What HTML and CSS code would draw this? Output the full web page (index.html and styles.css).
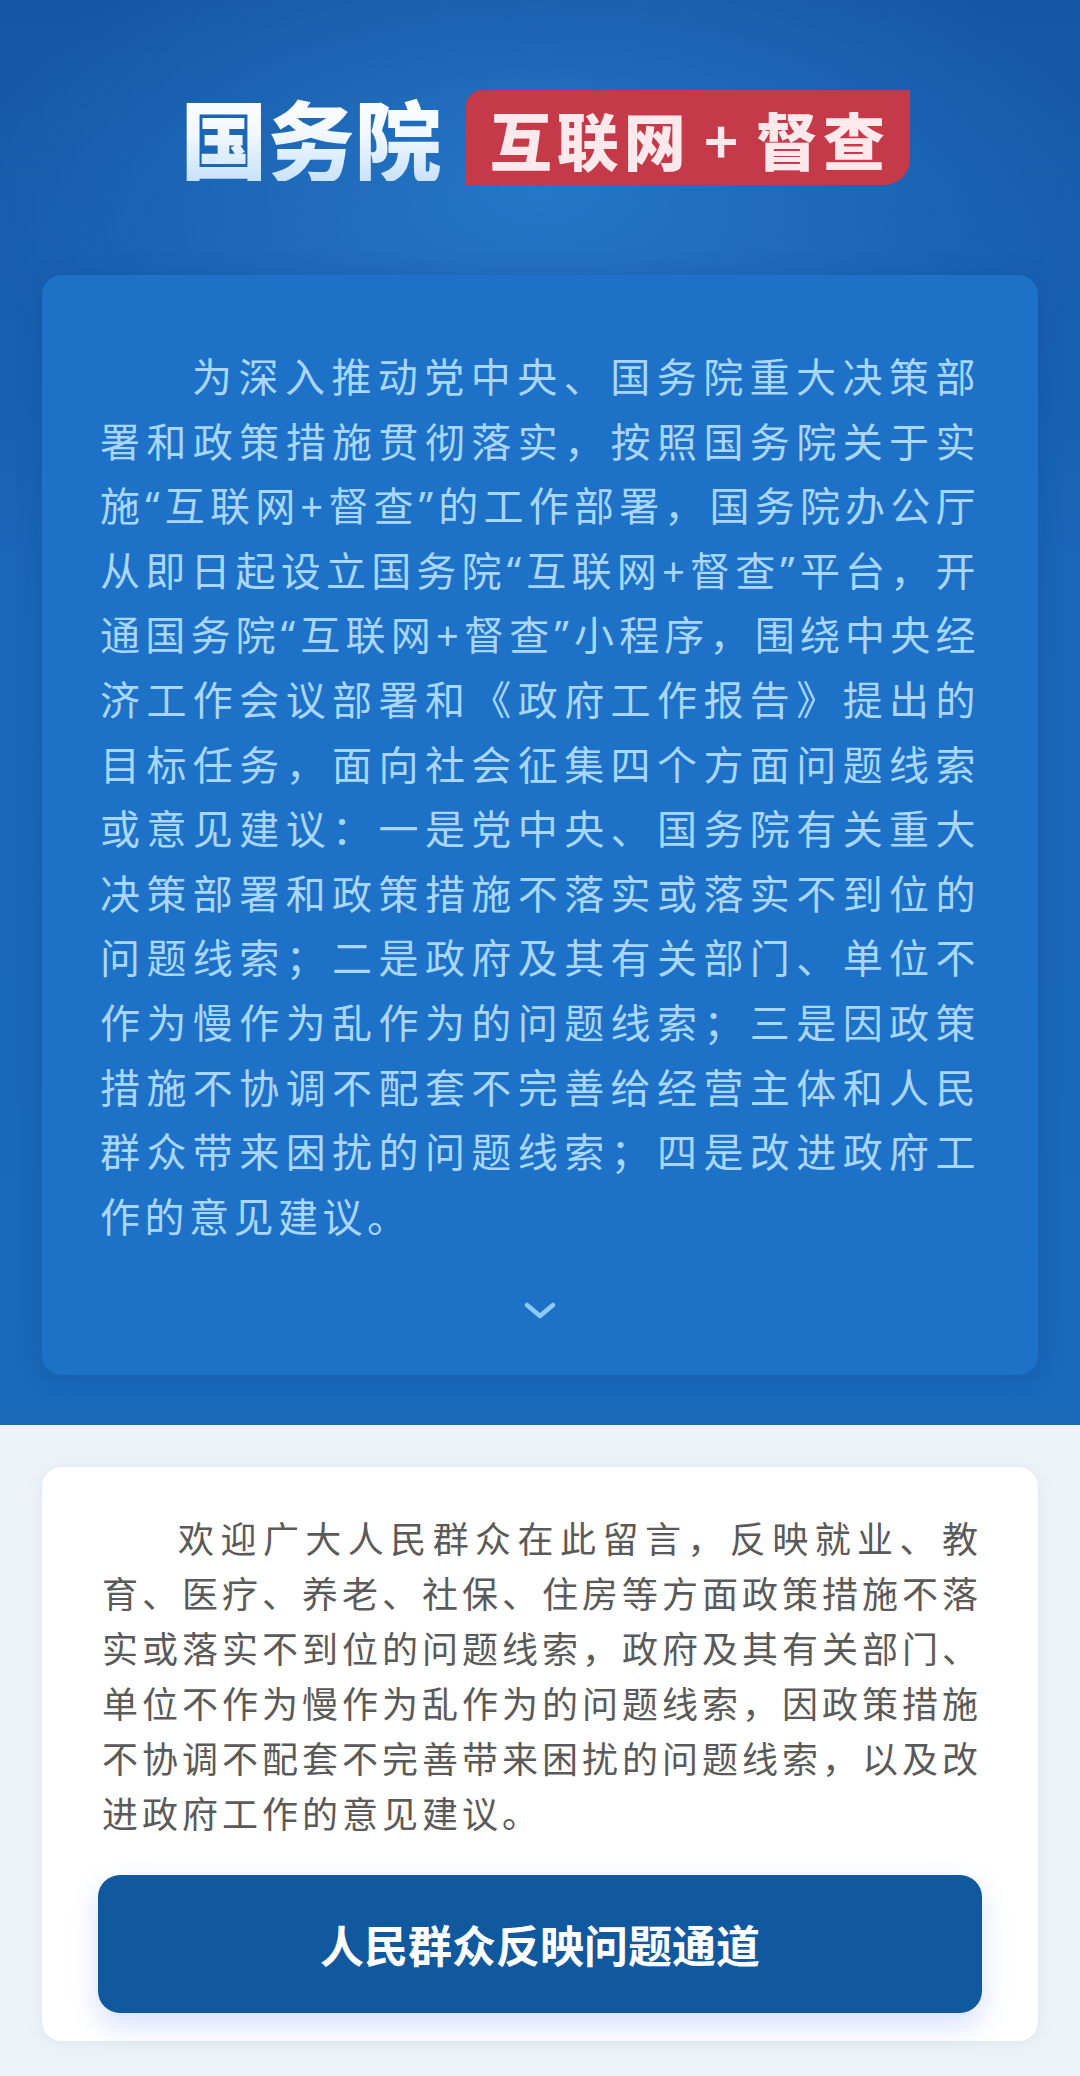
FILE: index.html
```html
<!DOCTYPE html>
<html lang="zh-CN">
<head>
<meta charset="utf-8">
<title>国务院互联网+督查</title>
<link rel="stylesheet" href="styles.css">
</head>
<body>
<section class="hero">
  <header class="title">
    <h1 class="title-main">国务院</h1>
    <div class="badge">
      <span class="badge-word">互联网</span>
      <span class="badge-plus">+</span>
      <span class="badge-word">督查</span>
    </div>
  </header>
  <article class="intro-card">
    <p class="intro-text">为深入推动党中央、国务院重大决策部署和政策措施贯彻落实，按照国务院关于实施“互联网+督查”的工作部署，国务院办公厅从即日起设立国务院“互联网+督查”平台，开通国务院“互联网+督查”小程序，围绕中央经济工作会议部署和《政府工作报告》提出的目标任务，面向社会征集四个方面问题线索或意见建议：一是党中央、国务院有关重大决策部署和政策措施不落实或落实不到位的问题线索；二是政府及其有关部门、单位不作为慢作为乱作为的问题线索；三是因政策措施不协调不配套不完善给经营主体和人民群众带来困扰的问题线索；四是改进政府工作的意见建议。</p>
    <div class="toggle">
      <svg class="chevron" width="36" height="20" viewBox="0 0 36 20"><polyline points="5,4 18,15 31,4" fill="none" stroke="#8ccbff" stroke-width="4.6" stroke-linecap="round" stroke-linejoin="round"/></svg>
    </div>
  </article>
</section>
<section class="lower">
  <article class="feedback-card">
    <p class="feedback-text">欢迎广大人民群众在此留言，反映就业、教育、医疗、养老、社保、住房等方面政策措施不落实或落实不到位的问题线索，政府及其有关部门、单位不作为慢作为乱作为的问题线索，因政策措施不协调不配套不完善带来困扰的问题线索，以及改进政府工作的意见建议。</p>
    <button class="channel-btn" type="button">人民群众反映问题通道</button>
  </article>
</section>
</body>
</html>
```

FILE: styles.css
```css
* { box-sizing: border-box; }

html, body {
  margin: 0;
  padding: 0;
}

body {
  width: 1080px;
  font-family: "Noto Sans CJK SC", "Noto Sans", sans-serif;
  background: #eef3f7;
}

.hero {
  padding: 90px 42px 50px;
  background:
    radial-gradient(ellipse 560px 300px at 540px 190px, rgba(52, 138, 220, 0.55), rgba(52, 138, 220, 0) 100%),
    linear-gradient(180deg, #1457a5 0%, #1a66b8 40%, #1a69bb 100%);
}

.title {
  height: 95px;
  display: flex;
  align-items: center;
  justify-content: center;
  gap: 24px;
  padding-left: 10px;
}

.title-main {
  margin: 0;
  font-size: 87px;
  font-weight: 900;
  line-height: 1;
  letter-spacing: 0;
  background: linear-gradient(180deg, #ffffff 0%, #f2f8ff 45%, #c9e2fa 100%);
  -webkit-background-clip: text;
  background-clip: text;
  color: transparent;
}

.badge {
  width: 444px;
  height: 95px;
  display: flex;
  align-items: center;
  justify-content: center;
  gap: 18px;
  background: #c43a48;
  border-radius: 16px 0 26px 0;
  color: #fde9ec;
  font-size: 62px;
  font-weight: 900;
  line-height: 1;
  padding-top: 2px;
}

.badge-word {
  letter-spacing: 5px;
  margin-right: -5px;
}

.badge-plus {
  font-size: 58px;
  font-weight: 700;
}

.intro-card {
  margin-top: 90px;
  background: #1d72c8;
  border-radius: 20px;
  padding: 70px 58px 54px;
  box-shadow: 0 4px 24px rgba(10, 60, 130, 0.25);
}

.intro-text {
  margin: 0;
  font-family: "Noto Sans", "Noto Sans CJK SC", sans-serif;
  font-size: 40px;
  line-height: 64.6px;
  letter-spacing: 4.5px;
  text-indent: 92px;
  text-align: justify;
  color: #a9d6ff;
}

.toggle {
  margin-top: 52px;
  display: flex;
  justify-content: center;
}

.chevron {
  display: block;
}

.lower {
  padding: 42px 42px 35px;
}

.feedback-card {
  background: #ffffff;
  border-radius: 20px;
  padding: 43px 56px 28px;
  box-shadow: 0 2px 16px rgba(150, 170, 190, 0.18);
}

.feedback-text {
  margin: 0;
  padding-left: 4px;
  font-size: 36px;
  line-height: 55px;
  letter-spacing: 4px;
  text-indent: 76px;
  text-align: justify;
  color: #5a5a5a;
}

.channel-btn {
  display: block;
  width: 100%;
  height: 138px;
  margin-top: 35px;
  border: 0;
  border-radius: 22px;
  background: #11599f;
  color: #ffffff;
  font-family: "Noto Sans CJK SC", "Noto Sans", sans-serif;
  font-size: 44px;
  font-weight: 700;
  letter-spacing: 0;
  box-shadow: 0 12px 28px rgba(70, 110, 255, 0.22);
}
```
